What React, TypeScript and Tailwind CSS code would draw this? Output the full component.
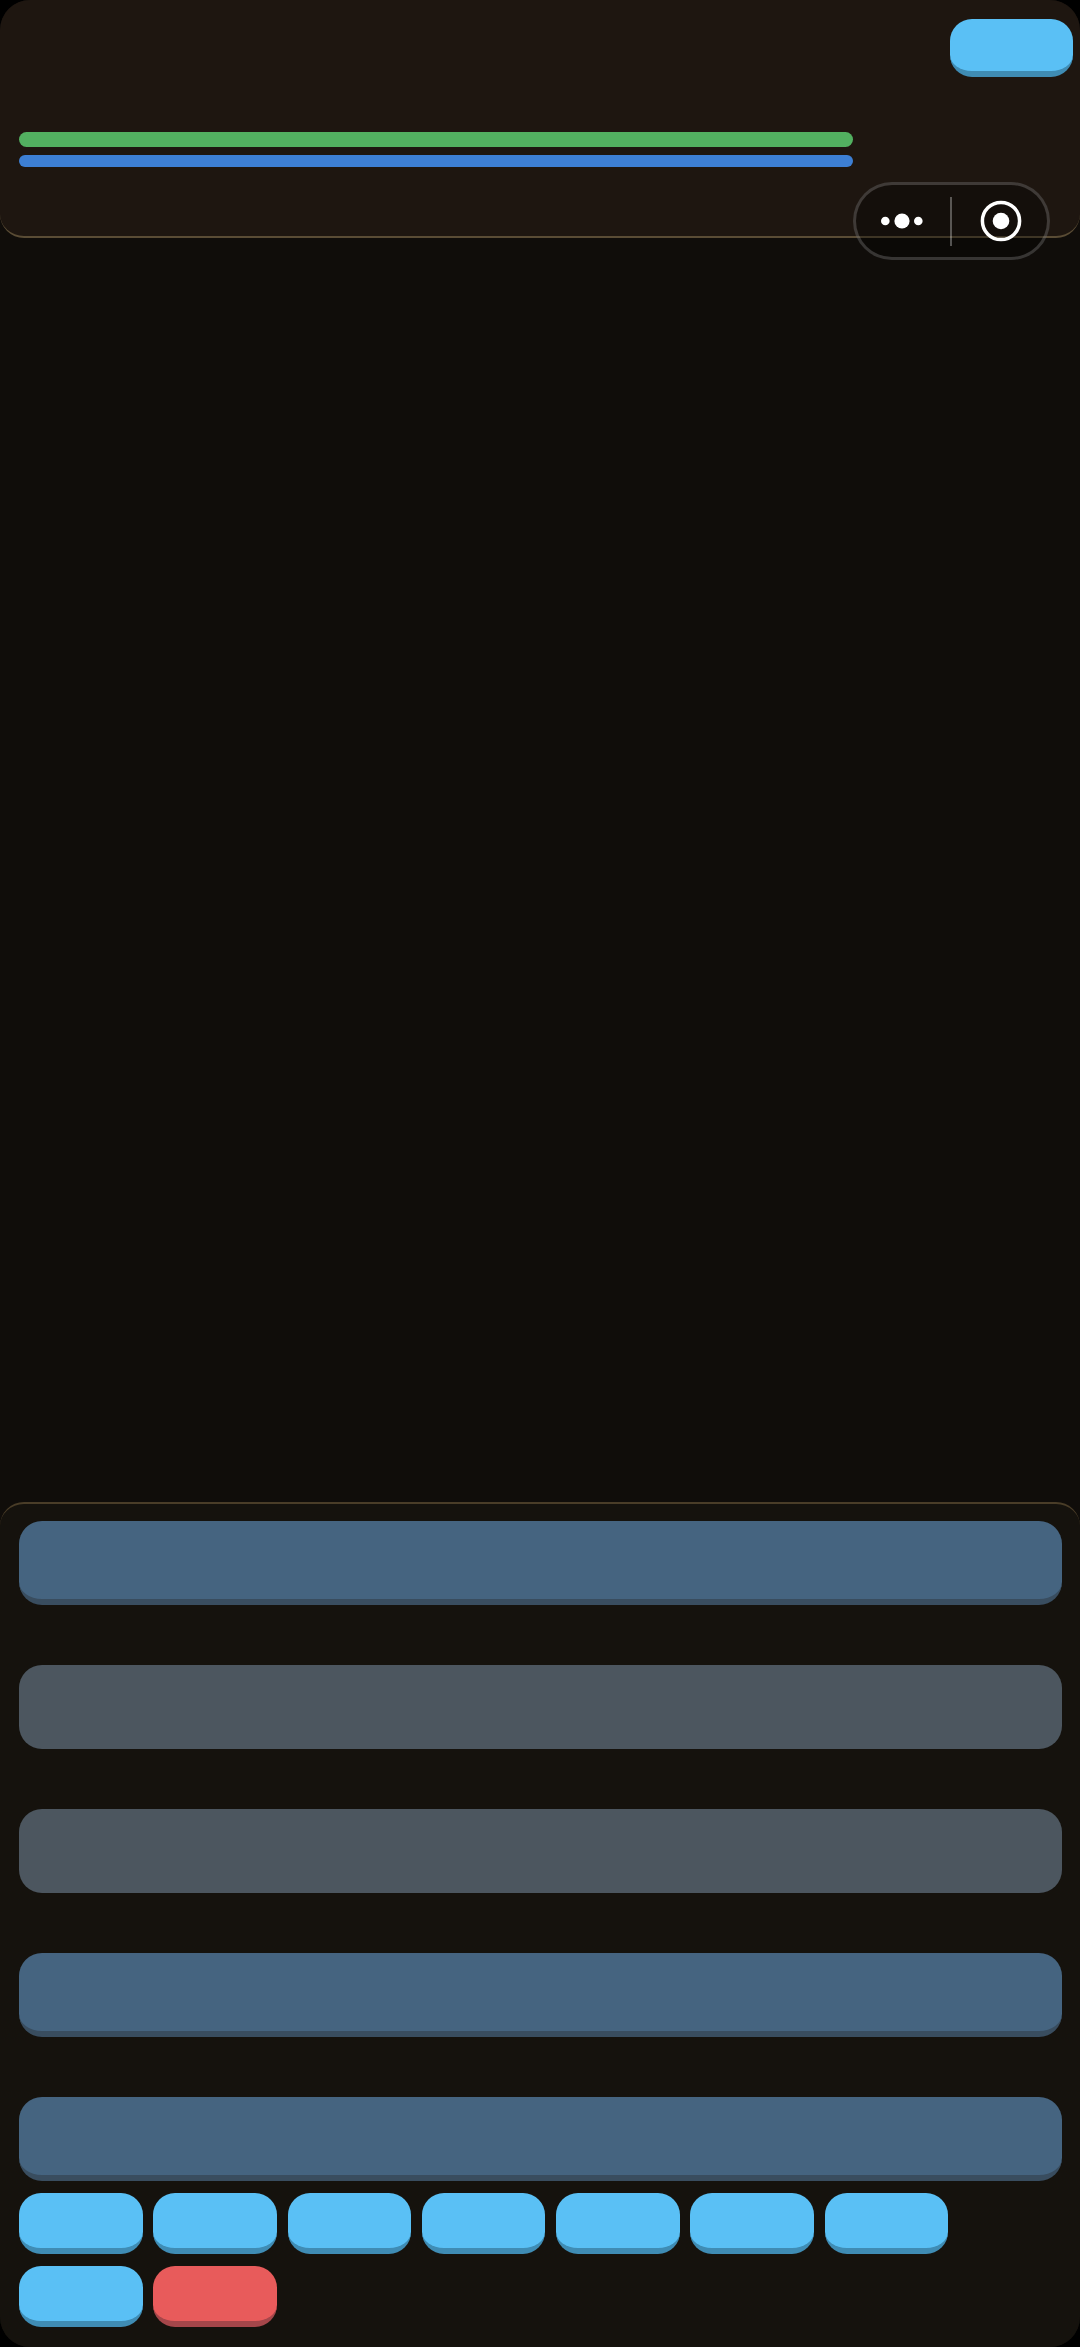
export default function App() {
  const small = "h-[61px] w-[123.5px] rounded-[22px] border-b-[6px] border-[#3f8cb4] bg-[#5ac0f5]";
  const blueRow = "h-[84px] w-full rounded-[23px] border-b-[6px] border-[#394d5f] bg-[#456480]";
  const grayRow = "h-[84px] w-full rounded-[23px] bg-[#4c565f]";
  return (
    <div className="relative flex h-[2347px] w-[1080px] flex-col bg-black">
      <div className="flex flex-1 flex-col overflow-hidden rounded-[30px] bg-[#100d0a]">
        <header className="h-[238px] shrink-0 rounded-[24px] border-b-2 border-[#5a4c35] bg-[#1e1610] pl-[19px] pr-[7px] pt-[19px]">
          <div className="flex justify-end">
            <div className="h-[58px] w-[123px] rounded-[22px] border-b-[6px] border-[#3f8cb4] bg-[#5ac0f5]" />
          </div>
          <div className="mt-[55px] h-[15px] w-[834px] rounded-full bg-[#52b060]" />
          <div className="mt-[8px] h-[12px] w-[834px] rounded-full bg-[#3d7fd4]" />
        </header>
        <div className="flex-1" />
        <section className="h-[845px] shrink-0 rounded-t-[24px] border-t-2 border-[#4a3d28] bg-[#15120d] pl-[19px] pr-[18px] pt-[17px]">
          <div className={blueRow} />
          <div className={`${grayRow} mt-[60px]`} />
          <div className={`${grayRow} mt-[60px]`} />
          <div className={`${blueRow} mt-[60px]`} />
          <div className={`${blueRow} mt-[60px]`} />
          <div className="mt-[12px] flex flex-wrap gap-x-[10.8px] gap-y-[12px]">
            {[0, 1, 2, 3, 4, 5, 6, 7].map((i) => (
              <div key={i} className={small} />
            ))}
            <div className="h-[61px] w-[123.5px] rounded-[22px] border-b-[6px] border-[#a5464a] bg-[#e85b5b]" />
          </div>
        </section>
      </div>
      <div className="absolute left-[853px] top-[182px] flex h-[78px] w-[197px] items-center rounded-full border-[3px] border-[#ffffff2e] bg-[#0000004d]">
        <div className="flex w-[94px] items-center pl-[25px]">
          <svg width="42" height="16" viewBox="0 0 42 16" fill="#fff">
            <circle cx="4.3" cy="8" r="4.3" />
            <circle cx="21" cy="8" r="7.6" />
            <circle cx="37.3" cy="8" r="4.3" />
          </svg>
        </div>
        <div className="h-[49px] w-[2px] bg-[#ffffff4d]" />
        <div className="flex flex-1 items-center pl-[28px]">
          <svg width="42" height="42" viewBox="0 0 42 42" fill="none">
            <circle cx="21" cy="21" r="18.6" stroke="#fff" strokeWidth="3.5" />
            <circle cx="21" cy="21" r="8.3" fill="#fff" />
          </svg>
        </div>
      </div>
    </div>
  );
}
